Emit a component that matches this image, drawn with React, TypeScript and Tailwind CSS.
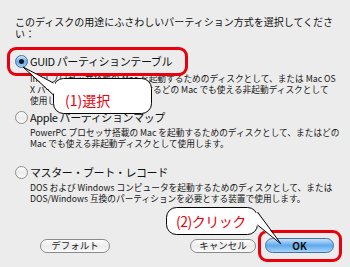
import React from "react";

function Radio({ checked }: { checked?: boolean }) {
  return checked ? (
    <div className="w-[13px] h-[13px] rounded-full border border-[#4d6f9a] bg-linear-to-b from-[#cfe6fb] via-[#6aaee9] to-[#9fd0f7] flex items-center justify-center shrink-0">
      <div className="w-[5px] h-[5px] rounded-full bg-[#10182a]" />
    </div>
  ) : (
    <div className="w-[13px] h-[13px] rounded-full border border-[#8e8e8e] bg-linear-to-b from-[#ffffff] via-[#ececec] to-[#fafafa] shrink-0" />
  );
}

function Option({
  checked,
  label,
  lines,
  rowMt,
  descMt,
}: {
  checked?: boolean;
  label: string;
  lines: string[];
  rowMt: string;
  descMt: string;
}) {
  return (
    <div>
      <div className={`flex items-center h-[14px] pl-[15px] gap-[2px] ${rowMt}`}>
        <Radio checked={checked} />
        <span className="text-[11px] leading-[14px] tracking-[-0.4px] text-[#111] whitespace-nowrap">{label}</span>
      </div>
      <div className={`pl-[30px] text-[8.7px] leading-[11px] text-[#141414] whitespace-nowrap ${descMt}`}>
        {lines.map((l, i) => (
          <div key={i}>{l}</div>
        ))}
      </div>
    </div>
  );
}

function PillButton({ label, w, primary }: { label: string; w: string; primary?: boolean }) {
  return primary ? (
    <div
      className={`${w} h-[15px] rounded-full border border-[#4b6f9e] bg-linear-to-b from-[#c4e2fb] via-[#5fa9ec] to-[#a4d5fa] flex items-center justify-center text-[10px] font-bold text-[#111]`}
    >
      {label}
    </div>
  ) : (
    <div
      className={`${w} h-[14px] rounded-full border border-[#8a8a8a] bg-linear-to-b from-[#ffffff] via-[#ebebeb] to-[#fbfbfb] flex items-center justify-center text-[9.5px] text-[#222]`}
    >
      {label}
    </div>
  );
}

export default function App() {
  return (
    <div
      className="relative w-[350px] h-[267px] overflow-hidden bg-[#ececec]"
      style={{ fontFamily: '"Noto Sans CJK JP", "Noto Sans", sans-serif' }}
    >
      <div className="pt-[16px] pl-[15px] text-[10px] leading-[12px] text-[#111] whitespace-nowrap">
        <div>このディスクの用途にふさわしいパーティション方式を選択してくださ</div>
        <div>い：</div>
      </div>

      <Option
        checked
        label="GUID パーティションテーブル"
        rowMt="mt-[14px]"
        descMt="mt-[5px]"
        lines={[
          "Intel プロセッサ搭載の Mac を起動するためのディスクとして、または Mac OS",
          "X バージョン 10.4 以降を実行するどの Mac でも使える非起動ディスクとして",
          "使用します。",
        ]}
      />
      <Option
        label="Apple パーティションマップ"
        rowMt="mt-[4px]"
        descMt="mt-[3px]"
        lines={[
          "PowerPC プロセッサ搭載の Mac を起動するためのディスクとして、またはどの",
          "Mac でも使える非起動ディスクとして使用します。",
        ]}
      />
      <Option
        label="マスター・ブート・レコード"
        rowMt="mt-[16px]"
        descMt="mt-[3px]"
        lines={[
          "DOS および Windows コンピュータを起動するためのディスクとして、または",
          "DOS/Windows 互換のパーティションを必要とする装置で使用します。",
        ]}
      />

      <div className="mt-[34px] flex items-center pl-[40px] pr-[16px]">
        <PillButton label="デフォルト" w="w-[70px]" />
        <div className="flex-1" />
        <PillButton label="キャンセル" w="w-[66px]" />
        <div className="w-[9px]" />
        <PillButton label="OK" w="w-[69px]" primary />
      </div>

      {/* red highlight boxes */}
      <div className="absolute left-[7px] top-[47px] w-[181px] h-[29px] rounded-[9px] border-[3px] border-[#e8000b]" />
      <div className="absolute left-[258px] top-[230px] w-[84px] h-[32px] rounded-[9px] border-[3px] border-[#e8000b]" />

      {/* callouts */}
      <svg className="absolute left-0 top-0" width="350" height="267" viewBox="0 0 350 267">
        <rect x="53.5" y="78.5" width="98" height="35" rx="10" fill="#fff" stroke="#000" strokeWidth="1" />
        <polygon points="55,83 23,67 55,95" fill="#fff" />
        <polyline points="53.5,83 23,67 53.5,95" fill="none" stroke="#000" strokeWidth="1" />

        <rect x="166.5" y="207.5" width="91" height="27" rx="10" fill="#fff" stroke="#000" strokeWidth="1" />
        <polygon points="256,212 281,244 256,225" fill="#fff" />
        <polyline points="257.5,212 281,244 257.5,225" fill="none" stroke="#000" strokeWidth="1" />
      </svg>
      <div className="absolute left-[65px] top-[91px] text-[14px] leading-[18px] text-[#e8000b]">(1)選択</div>
      <div className="absolute left-[176px] top-[212px] text-[14px] leading-[18px] tracking-[-0.5px] text-[#e8000b]">(2)クリック</div>
    </div>
  );
}
